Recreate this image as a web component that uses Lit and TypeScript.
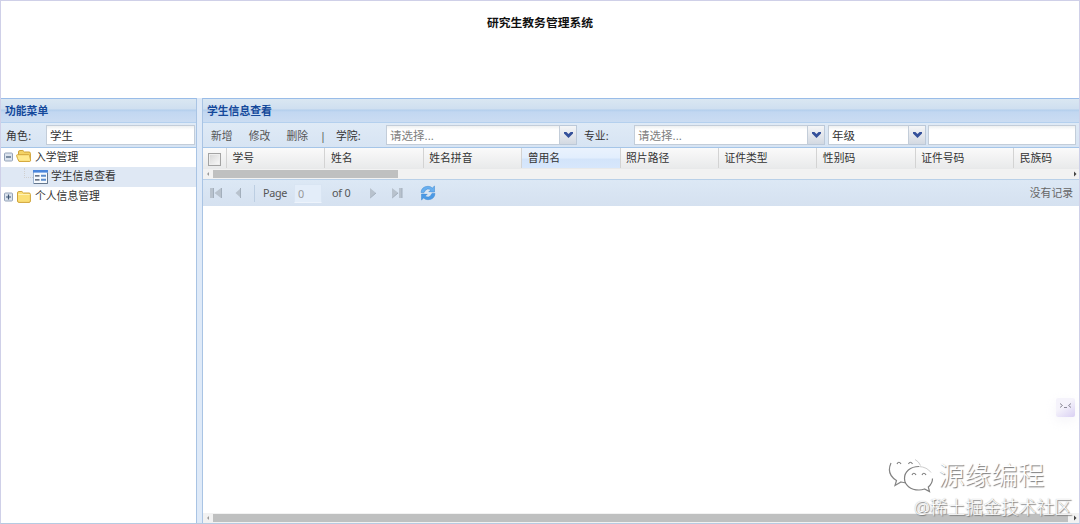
import { LitElement, html, css, svg } from "lit";
import { customElement, property } from "lit/decorators.js";

const arrow = svg`<path d="M0 0h2.4L4.5 2 6.6 0H9v1.4L4.5 6 0 1.4z" fill="#34509a"/>`;

@customElement("combo-box")
class ComboBox extends LitElement {
  @property() value = "";
  @property({ type: Boolean }) hint = false;
  @property({ type: Boolean }) trigger = false;

  static styles = css`
    :host { display: flex; box-sizing: border-box; height: 20px; }
    .field {
      flex: 1; min-width: 0; box-sizing: border-box; border: 1px solid #c3cdd9;
      background: linear-gradient(#eef0f1, #fff 4px); padding-left: 3px;
      font-size: 11.5px; line-height: 19px; color: #333; white-space: nowrap;
    }
    .hint { color: #808080; }
    .trigger {
      box-sizing: border-box; width: 17px; display: flex; align-items: center; justify-content: center;
      border: 1px solid #bcc9d9; border-left: 0; background: linear-gradient(#f4f5f7, #d3d9e2);
    }
  `;

  render() {
    return html`<div class="field ${this.hint ? "hint" : ""}">${this.value}</div>
      ${this.trigger ? html`<div class="trigger"><svg width="9" height="6">${arrow}</svg></div>` : ""}`;
  }
}

@customElement("h-scroller")
class HScroller extends LitElement {
  @property({ type: Number }) thumb = 100;

  static styles = css`
    :host { display: flex; align-items: center; height: 10px; background: #f2f2f2; }
    .cap { width: 10px; display: flex; justify-content: center; }
    .cap.end { width: 8px; }
    .track { flex: 1; }
    .thumb { height: 8px; background: #bfc0c0; }
  `;

  render() {
    return html`<div class="cap"><svg width="4" height="6"><path d="M3 1v4L1 3z" fill="#999"/></svg></div>
      <div class="track"><div class="thumb" style="width:${this.thumb}px"></div></div>
      <div class="cap end"><svg width="4" height="6"><path d="M1 .5v5L3.5 3z" fill="#444"/></svg></div>`;
  }
}

const toggle = (open: boolean) => html`<svg class="toggle" width="9" height="10" viewBox="0 0 9 10">
  <rect x=".5" y="1" width="8" height="8" rx="1" fill="#dbe3ee" stroke="#93a2b8"/>
  <path d=${open ? "M2 5h5" : "M2 5h5M4.5 2.500v5"} stroke="#3d5674" stroke-width="1.2"/></svg>`;

const folder = (open: boolean) => html`<svg class="icon" width="16" height="14" viewBox="0 0 16 14">
  ${open
    ? svg`<path d="M2.500 11V3q0-1.500 1.400-1.500h3L8.500 3H13q1.400 0 1.400 1.400V11q0 1.400-1.400 1.400H4q-1.500 0-1.500-1.400z" fill="#f3d265" stroke="#cfa338"/>
      <path d="M3 12.400Q1.200 9.500.6 6.500q0-.8.8-.8h11.200q.8 0 1 .8l1 4.800q0 1.100-1 1.100z" fill="#ffe98c" stroke="#d3a63a"/>`
    : svg`<path d="M1.500 11V3q0-1.500 1.400-1.500h3L7.500 3H13q1.400 0 1.400 1.400V11q0 1.400-1.400 1.400H3q-1.500 0-1.500-1.400z" fill="#fbdf76" stroke="#d0a43a"/>
      <path d="M2.300 4.500h11.300" stroke="#fff2b5"/>`}</svg>`;

const formIcon = html`<svg class="icon" width="15" height="14" viewBox="0 0 15 14">
  <rect x=".5" y=".5" width="14" height="13" fill="#f6fafe" stroke="#9db4d0"/>
  <path d="M0 0h15v2.600H0z" fill="#4a86dc"/><path d="M1 13.500h13.500V3" fill="none" stroke="#66788e"/>
  <path d="M2 5.800h4.500M2 9.800h4.500" stroke="#3f4d64" stroke-width="1.300"/>
  <path d="M8 5.700h5M8 9.700h5" stroke="#5b8ccb" stroke-width="2"/></svg>`;

@customElement("app-root")
class AppRoot extends LitElement {
  private columns = ["学号", "姓名", "姓名拼音", "曾用名", "照片路径", "证件类型", "性别码", "证件号码", "民族码"];

  static styles = css`
    :host {
      display: flex; flex-direction: column; position: relative; box-sizing: border-box;
      width: 1080px; height: 524px; overflow: hidden; background: #fff; color: #333;
      border: 1px solid #cfd0e8; border-bottom-color: #b5cbe2;
      font: 10.8px/20px "Noto Sans", "Noto Sans CJK SC", sans-serif;
    }
    .top { height: 97px; box-sizing: border-box; padding-top: 11px; text-align: center; font-weight: 700; font-size: 11.8px; color: #111; }
    .body { flex: 1; min-height: 0; display: flex; background: #dfeaf8; }
    .panel { display: flex; flex-direction: column; box-sizing: border-box; background: #fff; border-top: 1px solid #99bce8; }
    .side { width: 196px; border-right: 1px solid #a9c4e4; }
    .main { flex: 1; min-width: 0; margin-left: 5px; border-left: 1px solid #a9c4e4; }
    .title {
      height: 24px; box-sizing: border-box; padding-left: 4px; line-height: 23px;
      color: #15499b; font-weight: 700; border-bottom: 1px solid #b4d0ee;
      background: linear-gradient(#dae7f2 0, #cfdff0 10px, #b3ceec 11px, #c2d7f1 13px, #cbdcf2 100%);
    }
    .bar { display: flex; align-items: center; box-sizing: border-box; background: #dae6f4; }
    .tools { height: 25px; border-bottom: 1px solid #a5c5e8; background: linear-gradient(#dfeaf6, #d7e4f3); }
    .tools span { line-height: 22px; padding-top: 2px; white-space: nowrap; }
    .role { width: 40px; padding-left: 5px; letter-spacing: .3px; }
    .side combo-box { width: 149px; }
    .action { width: 37.7px; color: #555; }
    .action:first-child { margin-left: 8px; }
    .bar-sep { width: 12px; margin-left: -4px; color: #555; }
    .college { width: 50px; margin-left: 4px; }
    .w-college { width: 191px; }
    .major { width: 50px; margin-left: 7px; }
    .w-major { width: 191px; }
    .w-grade { width: 98px; margin-left: 3px; }
    .w-free { flex: 1; margin: 0 3px 0 2px; }
    .row { height: 20px; display: flex; align-items: center; white-space: nowrap; line-height: 18px; }
    .row:first-child { height: 19px; line-height: 17px; align-items: flex-start; }
    .row:first-child .toggle { margin-top: 4px; }
    .row:first-child .icon { margin-top: 1px; }
    .row.on { background: #dfe8f4; }
    .row > b { font-weight: 400; height: 20px; }
    .row .toggle { margin: 0 3px 0 3px; }
    .row .icon { margin-right: 3px; flex: none; }
    .branch { width: 9px; height: 10px; margin: -9px 0 0 23px; border: 1px dotted #d0d0d0; border-top: 0; border-right: 0; box-sizing: border-box; }
    .head { display: flex; height: 21px; overflow: hidden; background: linear-gradient(#fafafa, #e9eaeb); border-bottom: 1px solid #e8e9ea; box-sizing: border-box; }
    .check { width: 24px; flex: none; box-sizing: border-box; padding: 5px 0 0 5px; border-right: 1px solid #d3d3d3; }
    .box { width: 13px; height: 13px; box-sizing: border-box; border: 1px solid #a3a3a3; background: linear-gradient(135deg, #d5d5d5, #fafafa); box-shadow: inset 0 0 0 1px #eee; }
    .col { width: 98.4px; flex: none; box-sizing: border-box; padding-left: 5.5px; border-right: 1px solid #d3d3d3; line-height: 20px; }
    .col.hot { background: linear-gradient(#eaf2fd 0, #e2eefd 10px, #d3e4fa 11px, #d7e7fc); }
    .pager { height: 27px; border-top: 1px solid #b9d0e8; background: linear-gradient(#dce8f5, #d5e1f0); color: #555; }
    .pager svg { flex: none; }
    .pager .first { margin-left: 6px; }
    .pager .prev { margin-left: 13px; }
    .pager .last { margin-left: 14px; }
    .pager .refresh { margin-left: 17px; }
    .line { width: 1px; height: 17px; background: #bccee2; margin: 0 8px 0 12px; }
    .page { width: 31px; letter-spacing: -.3px; }
    .num { width: 28px; height: 19px; line-height: 17px; box-sizing: border-box; padding-left: 3px; background: #e3edf9; border: 1px solid #d9e5f3; border-bottom-color: #edf3fb; color: #999; }
    .of { width: 37px; margin-left: 10px; letter-spacing: -.2px; }
    .gap { flex: 1; }
    .empty { margin-right: 6px; color: #666; }
    .canvas { flex: 1; }
    .float {
      position: absolute; left: 1055px; top: 397px; width: 19px; height: 19px; border-radius: 2px;
      background: linear-gradient(145deg, #f5f3fb 40%, #d9d0f3); box-shadow: 0 4px 12px #e6e4ef66;
    }
    .float svg { display: block; }
    .mark { position: absolute; white-space: nowrap; }
    .brand {
      left: 886px; top: 454px; display: flex; align-items: center; gap: 3px;
      font-size: 26.6px; line-height: 40px; font-weight: 300; color: #fff; text-shadow: 1px 1px 1px #777;
    }
    .site { left: 913px; top: 493px; font-size: 17.8px; line-height: 26px; font-weight: 300; color: #fff; text-shadow: 1px 1px 1px #777, 0 0 1px #aaa; }
  `;

  render() {
    return html`
      <div class="top">研究生教务管理系统</div>
      <div class="body">
        <div class="panel side">
          <div class="title">功能菜单</div>
          <div class="bar tools"><span class="role">角色:</span><combo-box value="学生"></combo-box></div>
          <div class="tree">
            <div class="row">${toggle(true)}${folder(true)}入学管理</div>
            <div class="row on"><i class="branch"></i>${formIcon}<b>学生信息查看</b></div>
            <div class="row">${toggle(false)}${folder(false)}<b>个人信息管理</b></div>
          </div>
        </div>
        <div class="panel main">
          <div class="title">学生信息查看</div>
          <div class="bar tools">
            <span class="action">新增</span><span class="action">修改</span><span class="action">删除</span>
            <span class="bar-sep">|</span>
            <span class="college">学院:</span><combo-box class="w-college" value="请选择..." hint trigger></combo-box>
            <span class="major">专业:</span><combo-box class="w-major" value="请选择..." hint trigger></combo-box>
            <combo-box class="w-grade" value="年级" trigger></combo-box>
            <combo-box class="w-free"></combo-box>
          </div>
          <div class="head">
            <div class="check"><div class="box"></div></div>
            ${this.columns.map((c) => html`<div class="col ${c === "曾用名" ? "hot" : ""}">${c}</div>`)}
          </div>
          <h-scroller .thumb=${185}></h-scroller>
          <div class="bar pager">
            <svg class="first" width="13" height="12"><path d="M1 1h3v10H1zM12 1v10L5.500 6z" fill="#b8c2cd"/><path d="M4.500 1v10M12.500 1v10" stroke="#a3afbc"/></svg>
            <svg class="prev" width="7" height="12"><path d="M6 1v10L.5 6z" fill="#b8c2cd"/><path d="M5.500 1v10" stroke="#a3afbc"/></svg>
            <i class="line"></i>
            <span class="page">Page</span><span class="num">0</span><span class="of">of 0</span>
            <svg width="8" height="12"><path d="M1 1v10l6-5z" fill="#b8c2cd"/><path d="M1.200 11 7 6" stroke="#a3afbc"/></svg>
            <svg class="last" width="12" height="12"><path d="M1 1v10l6.500-5zM8 1h3v10H8z" fill="#b8c2cd"/><path d="M1.200 11 7 6M11 1v10" stroke="#a3afbc"/></svg>
            <svg class="refresh" width="16" height="16" viewBox="0 0 16 16">
              <path d="M1 7.500Q1.500 1.500 8 1.300q2.800 0 4.300 1.700L14.500 1v6H8.700l2-2Q9.500 3.800 7.600 4 5 4.500 4.200 7.500z" fill="#69b0f0" stroke="#3b86d0" stroke-width=".5"/>
              <path d="M15 8.500q-.5 6-7 6.200-2.800 0-4.300-1.700L1.500 15V9h5.800l-2 2q1.200 1.200 3.100 1 2.600-.5 3.400-3.500z" fill="#4b9ae6" stroke="#3b86d0" stroke-width=".5"/>
              <path d="M4.500 8h7" stroke="#dbe6f3" stroke-width="1.300"/>
            </svg>
            <span class="gap"></span><span class="empty">没有记录</span>
          </div>
          <div class="canvas"></div>
          <h-scroller .thumb=${855}></h-scroller>
        </div>
      </div>
      <div class="float"><svg width="19" height="19"><path d="M4 5.500l2.500 2L4 9.500M15 5.500l-2.500 2 2.500 2M8 9.500h3" fill="none" stroke="#8d8b99"/></svg></div>
      <div class="mark brand">
        <svg width="48" height="38" viewBox="0 0 48 38">
          <g fill="none">
            <path d="M4 7Q-1 18 9.500 24.500L8 29.500l6-3.500q2.500.8 5 .8" stroke="#858585" stroke-width="1.200"/>
            <path d="M28 3.500q4 2 5.500 6" stroke="#ccc"/>
            <path d="M32 10.500C23 10.500 17.500 16 17.500 22.500 17.500 29 23.500 34 32 34q3 0 5.500-1l5 2.500-1.200-4.500q4.200-3.500 4.200-8.500" stroke="#808080" stroke-width="1.200"/>
            <path d="M32 10.500q8 .5 12 6" stroke="#ccc"/>
            <path d="M10 8q1.800-3.500 4 0M21.500 8q1.800-3.500 4 0M25 19q1.800-3.500 4 0M35 19q1.800-3.500 4 0" stroke="#808080" stroke-width="1.200"/>
          </g>
        </svg>源缘编程
      </div>
      <div class="mark site">@稀土掘金技术社区</div>`;
  }
}
